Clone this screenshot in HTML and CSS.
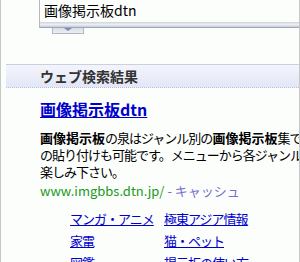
FILE: index.html
```html
<!DOCTYPE html>
<html lang="ja">
<head>
    <meta charset="UTF-8">
    <title>画像掲示板dtn - 検索</title>
    <link rel="stylesheet" href="styles.css">
</head>
<body>
    <div class="frame">
        <div class="searchbox">
            <div class="query">画像掲示板dtn</div>
            <div class="edge"></div>
        </div>
        <div class="tab"><span class="arrow"></span></div>

        <div class="section-head">ウェブ検索結果</div>

        <div class="result">
            <a class="title" href="#">画像掲示板dtn</a>
            <div class="snippet">
                <b>画像掲示板</b>の泉はジャンル別の<b>画像掲示板</b>集です。画像<br>
                の貼り付けも可能です。メニューから各ジャンルの掲示板をお<br>
                楽しみ下さい。
            </div>
            <div class="url">www.imgbbs.dtn.jp/ <a href="#" class="cache">- キャッシュ</a></div>

            <div class="sitelinks">
                <a href="#">マンガ・アニメ</a>
                <a href="#">極東アジア情報</a>
                <a href="#">家電</a>
                <a href="#">猫・ペット</a>
                <a href="#">図鑑</a>
                <a href="#">掲示板の使い方</a>
            </div>
        </div>
    </div>
</body>
</html>
```

FILE: styles.css
```css
body {
    margin: 0;
    background: #fcfefc;
    font-family: "Noto Sans CJK JP", "Liberation Sans", sans-serif;
    color: #000;
}

.frame {
    width: 300px;
    height: 262px;
    box-sizing: border-box;
    border-left: 1px solid #c8c8c8;
    border-right: 1px solid #c8c8c8;
    overflow: hidden;
}

.searchbox {
    margin-left: 38px;
    border-left: 1px solid #b4b8c0;
    border-bottom: 1px solid #98aabc;
    background: #fcfefc;
}

.query {
    height: 22px;
    padding-left: 4px;
    font-size: 14px;
    line-height: 20px;
    white-space: nowrap;
}

.edge {
    height: 5px;
    background: linear-gradient(#cfd2da, #eceef3 50%, #c9cdd6);
}

.tab {
    margin-left: 51px;
    width: 30px;
    height: 5px;
    border: 1px solid #b0b8c6;
    border-top: none;
    background: linear-gradient(#dadde6, #eceef2);
    display: flex;
    justify-content: center;
}

.arrow {
    width: 0;
    height: 0;
    border-left: 4px solid transparent;
    border-right: 4px solid transparent;
    border-top: 3px solid #7a90b0;
}

.section-head {
    margin-top: 30px;
    margin-left: 5px;
    height: 22px;
    border-top: 1px solid #c8d0e2;
    border-bottom: 1px dotted #b4bcd6;
    background: linear-gradient(#f4f5fb, #e2e6f6);
    padding-left: 34px;
    font-size: 14px;
    font-weight: bold;
    line-height: 22px;
    color: #333;
    white-space: nowrap;
}

.result {
    padding-left: 39px;
    padding-top: 10px;
}

.title {
    display: block;
    font-size: 16px;
    font-weight: bold;
    line-height: 22px;
    color: #0000cc;
    white-space: nowrap;
}

.snippet {
    margin-top: 9px;
    font-size: 13px;
    line-height: 17px;
    letter-spacing: -1px;
    white-space: nowrap;
}

.snippet b {
    letter-spacing: 0;
}

.url {
    margin-top: 2px;
    font-size: 13px;
    line-height: 17px;
    color: #229922;
    white-space: nowrap;
}

.cache {
    color: #7272cc;
    text-decoration: none;
}

.sitelinks {
    margin-top: 9px;
    margin-left: 30px;
    display: grid;
    grid-template-columns: 94px auto;
    font-size: 13px;
    line-height: 22px;
    white-space: nowrap;
}

.sitelinks a {
    color: #0000cc;
    letter-spacing: -1px;
}
```
